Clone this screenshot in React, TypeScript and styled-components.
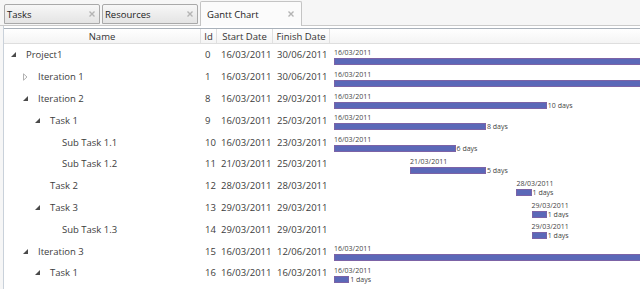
import React from "react";
import styled, { createGlobalStyle } from "styled-components";

const GlobalStyle = createGlobalStyle`
  html, body {
    margin: 0;
    padding: 0;
    background: #f6f6f6;
  }
  body {
    font-family: "Open Sans", "Noto Sans", sans-serif;
    color: #333;
  }
`;

const DAY = 15.2;

const Page = styled.div`
  width: 640px;
  height: 289px;
  overflow: hidden;
  display: flex;
  flex-direction: column;
`;

const TabStrip = styled.div`
  height: 25px;
  display: flex;
  align-items: flex-end;
  gap: 2px;
  padding-left: 4px;
  border-bottom: 1px solid #c9c9c9;
`;

const Tab = styled.div<{ $active?: boolean }>`
  box-sizing: border-box;
  width: ${(p) => (p.$active ? "102px" : "96px")};
  height: ${(p) => (p.$active ? "25px" : "20px")};
  margin-bottom: ${(p) => (p.$active ? "-1px" : "1px")};
  padding: ${(p) => (p.$active ? "0 7px 0 6px" : "0 4px 0 2px")};
  display: flex;
  align-items: center;
  justify-content: space-between;
  border: 1px solid ${(p) => (p.$active ? "#c4c4c4" : "#a9a9a9")};
  border-bottom: ${(p) => (p.$active ? "none" : "1px solid #a9a9a9")};
  border-radius: 2px 2px 0 0;
  background: ${(p) =>
    p.$active ? "#fbfbfb" : "linear-gradient(#f7f7f7, #e4e4e4)"};
  font-size: 9.5px;
  color: #222;
`;

const Close = () => (
  <svg width="6" height="6" viewBox="0 0 6 6">
    <path d="M0.5 0.5 L5.5 5.5 M5.5 0.5 L0.5 5.5" stroke="#b4b4b4" strokeWidth="1.4" />
  </svg>
);

const Panel = styled.div`
  flex: 1;
  margin-left: 3px;
  padding-top: 2px;
  border-left: 1px solid #c9d1da;
  background: #fff;
`;

const COLS = "197px 16px 56px 57px 1fr";

const HeaderRow = styled.div`
  display: grid;
  grid-template-columns: ${COLS};
  height: 14px;
  border-top: 1px solid #a9b1ba;
  border-bottom: 1px solid #dedede;
  background: linear-gradient(#ffffff, #f4f4f4);
`;

const HeaderCell = styled.div`
  display: flex;
  align-items: center;
  justify-content: center;
  font-size: 9.5px;
  color: #333;
  border-right: 1px solid #e0e0e0;
  white-space: nowrap;
  &:last-child {
    border-right: none;
  }
`;

const Row = styled.div`
  display: grid;
  grid-template-columns: ${COLS};
  height: 21.8px;
  font-size: 9.5px;
  color: #3c3c3c;
`;

const NameCell = styled.div<{ $level: number }>`
  display: flex;
  align-items: center;
  padding-left: ${(p) => p.$level * 12 + 7}px;
  white-space: nowrap;
`;

const Expander = styled.span`
  width: 15px;
  flex: none;
  display: flex;
  align-items: center;
`;

const Cell = styled.div`
  display: flex;
  align-items: center;
  padding-left: 4px;
  white-space: nowrap;
`;

const GanttCell = styled.div`
  position: relative;
  overflow: hidden;
  padding-left: 4px;
  padding-top: 4px;
`;

const BarLabel = styled.div`
  font-size: 7px;
  line-height: 9px;
  height: 9px;
  color: #444;
  white-space: nowrap;
`;

const BarLine = styled.div`
  display: flex;
  align-items: center;
  margin-top: 1px;
  white-space: nowrap;
`;

const Bar = styled.div`
  box-sizing: border-box;
  height: 7px;
  flex: none;
  background: #5b68b8;
  border: 1px solid #7c63a6;
`;

const Days = styled.span`
  font-size: 7px;
  line-height: 7px;
  color: #444;
  margin-left: 1px;
`;

type Exp = "open" | "closed" | "none";

interface Task {
  name: string;
  level: number;
  exp: Exp;
  id: number;
  start: string;
  finish: string;
  offset: number;
  len: number | null;
  days?: number;
}

const tasks: Task[] = [
  { name: "Project1", level: 0, exp: "open", id: 0, start: "16/03/2011", finish: "30/06/2011", offset: 0, len: null },
  { name: "Iteration 1", level: 1, exp: "closed", id: 1, start: "16/03/2011", finish: "30/06/2011", offset: 0, len: null },
  { name: "Iteration 2", level: 1, exp: "open", id: 8, start: "16/03/2011", finish: "29/03/2011", offset: 0, len: 14, days: 10 },
  { name: "Task 1", level: 2, exp: "open", id: 9, start: "16/03/2011", finish: "25/03/2011", offset: 0, len: 10, days: 8 },
  { name: "Sub Task 1.1", level: 3, exp: "none", id: 10, start: "16/03/2011", finish: "23/03/2011", offset: 0, len: 8, days: 6 },
  { name: "Sub Task 1.2", level: 3, exp: "none", id: 11, start: "21/03/2011", finish: "25/03/2011", offset: 5, len: 5, days: 5 },
  { name: "Task 2", level: 2, exp: "none", id: 12, start: "28/03/2011", finish: "28/03/2011", offset: 12, len: 1, days: 1 },
  { name: "Task 3", level: 2, exp: "open", id: 13, start: "29/03/2011", finish: "29/03/2011", offset: 13, len: 1, days: 1 },
  { name: "Sub Task 1.3", level: 3, exp: "none", id: 14, start: "29/03/2011", finish: "29/03/2011", offset: 13, len: 1, days: 1 },
  { name: "Iteration 3", level: 1, exp: "open", id: 15, start: "16/03/2011", finish: "12/06/2011", offset: 0, len: null },
  { name: "Task 1", level: 2, exp: "open", id: 16, start: "16/03/2011", finish: "16/03/2011", offset: 0, len: 1, days: 1 },
];

const Arrow = ({ exp }: { exp: Exp }) => {
  if (exp === "open")
    return (
      <svg width="5" height="5" viewBox="0 0 5 5">
        <path d="M5 0 L5 5 L0 5 Z" fill="#4a4a4a" />
      </svg>
    );
  if (exp === "closed")
    return (
      <svg width="5" height="8" viewBox="0 0 5 8">
        <path d="M0.5 0.8 L4 4 L0.5 7.2 Z" fill="#fff" stroke="#a8a8a8" strokeWidth="0.9" />
      </svg>
    );
  return null;
};

const TaskRow = ({ t }: { t: Task }) => {
  const width = t.len === null ? 400 : t.len * DAY;
  return (
    <Row>
      <NameCell $level={t.level}>
        <Expander>
          <Arrow exp={t.exp} />
        </Expander>
        {t.name}
      </NameCell>
      <Cell>{t.id}</Cell>
      <Cell>{t.start}</Cell>
      <Cell>{t.finish}</Cell>
      <GanttCell>
        <div style={{ marginLeft: t.offset * DAY }}>
          <BarLabel>{t.start}</BarLabel>
          <BarLine>
            <Bar style={{ width }} />
            {t.days !== undefined && <Days>{t.days} days</Days>}
          </BarLine>
        </div>
      </GanttCell>
    </Row>
  );
};

const App = () => (
  <Page>
    <GlobalStyle />
    <TabStrip>
      <Tab>
        Tasks <Close />
      </Tab>
      <Tab>
        Resources <Close />
      </Tab>
      <Tab $active>
        Gantt Chart <Close />
      </Tab>
    </TabStrip>
    <Panel>
      <HeaderRow>
        <HeaderCell>Name</HeaderCell>
        <HeaderCell>Id</HeaderCell>
        <HeaderCell>Start Date</HeaderCell>
        <HeaderCell>Finish Date</HeaderCell>
        <HeaderCell />
      </HeaderRow>
      {tasks.map((t) => (
        <TaskRow key={t.id} t={t} />
      ))}
    </Panel>
  </Page>
);

export default App;
